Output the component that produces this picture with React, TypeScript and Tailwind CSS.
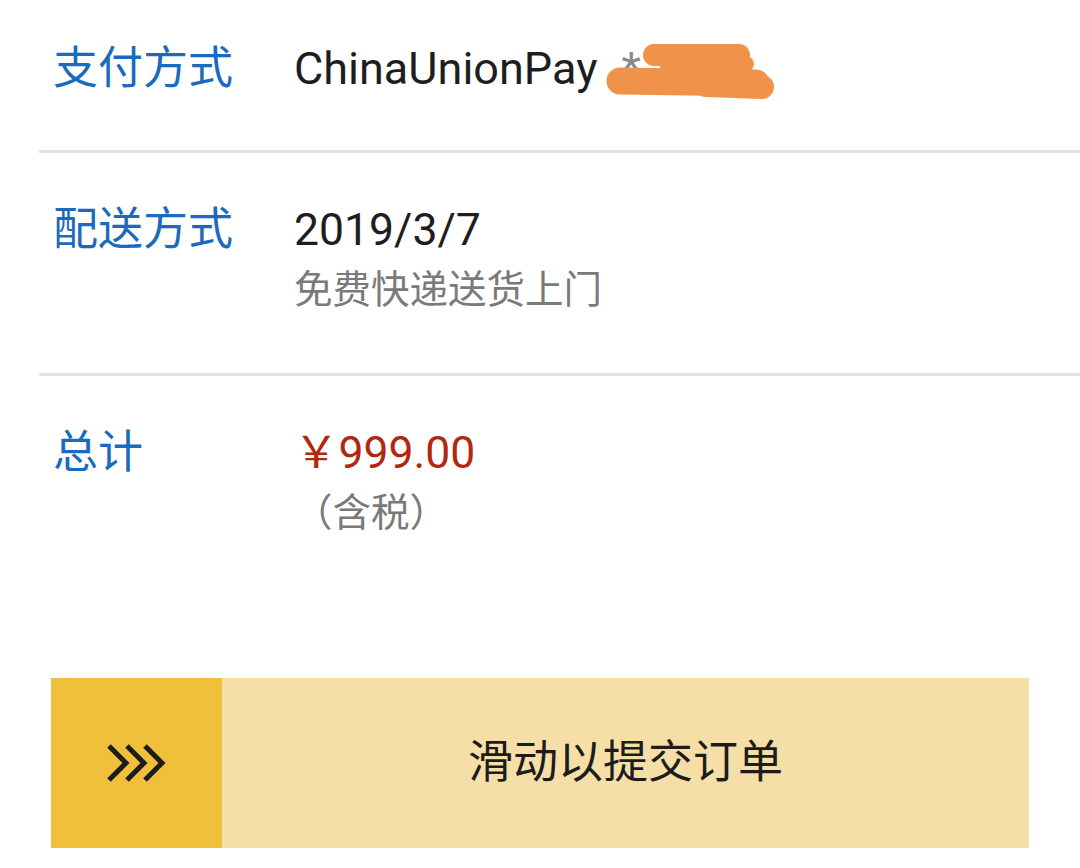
const font = "font-['Roboto','Noto_Sans_CJK_SC',sans-serif]";

function Chevrons() {
  return (
    <svg width="62" height="42" viewBox="0 0 62 42" fill="none">
      {[0, 18, 36].map((x) => (
        <path
          key={x}
          d={`M${x + 3} 4 L${x + 20} 21 L${x + 3} 38`}
          stroke="#1c1c1c"
          strokeWidth="5"
          strokeLinecap="butt"
          strokeLinejoin="miter"
        />
      ))}
    </svg>
  );
}

function Redacted() {
  return (
    <span className="relative ml-[24px] inline-block w-[150px] text-[#8a8a8a]">
      *
      <svg
        className="absolute -left-[15px] top-[5px]"
        width="172"
        height="60"
        viewBox="0 0 172 60"
        fill="none"
      >
        <g stroke="#f1924a" strokeLinecap="round">
          <path d="M48 11 L133 11" strokeWidth="22" />
          <path d="M60 18 L140 20" strokeWidth="16" />
          <path d="M14 37 L150 39" strokeWidth="27" />
          <path d="M100 41 L156 43" strokeWidth="24" />
        </g>
      </svg>
    </span>
  );
}

function Row({
  label,
  children,
  height,
  pt,
}: {
  label: string;
  children: React.ReactNode;
  height: string;
  pt: string;
}) {
  return (
    <div className={`flex ${height} ${pt}`}>
      <div className="w-[255px] pl-[14px] text-[45px] leading-[60px] text-[#1a6bbd]">{label}</div>
      <div className="flex flex-col">{children}</div>
    </div>
  );
}

export default function App() {
  return (
    <div className={`h-[868px] w-[1080px] overflow-hidden bg-white ${font}`}>
      <div className="pl-[39px]">
        <Row label="支付方式" height="h-[150px]" pt="pt-[39px]">
          <div className="flex items-center text-[45px] leading-[60px] text-[#1e1e1e]">
            ChinaUnionPay
            <Redacted />
          </div>
        </Row>
        <div className="h-[3px] bg-[#e4e4e4]" />
        <Row label="配送方式" height="h-[220px]" pt="pt-[47px]">
          <div className="text-[44.5px] leading-[60px] text-[#1e1e1e]">2019/3/7</div>
          <div className="text-[38.5px] leading-[60px] text-[#7a7a7a]">免费快递送货上门</div>
        </Row>
        <div className="h-[3px] bg-[#e4e4e4]" />
        <Row label="总计" height="h-[302px]" pt="pt-[47px]">
          <div className="text-[44.5px] leading-[60px] text-[#b2280f]">￥999.00</div>
          <div className="text-[38.5px] leading-[60px] text-[#7a7a7a]">（含税）</div>
        </Row>
      </div>
      <div className="ml-[51px] flex h-[170px] w-[978px]">
        <div className="flex w-[171px] items-center justify-center bg-[#f0c03c]">
          <Chevrons />
        </div>
        <div className="flex flex-1 items-center justify-center bg-[#f6dfa7] text-[45px] text-[#1c1c1c]">
          滑动以提交订单
        </div>
      </div>
    </div>
  );
}
